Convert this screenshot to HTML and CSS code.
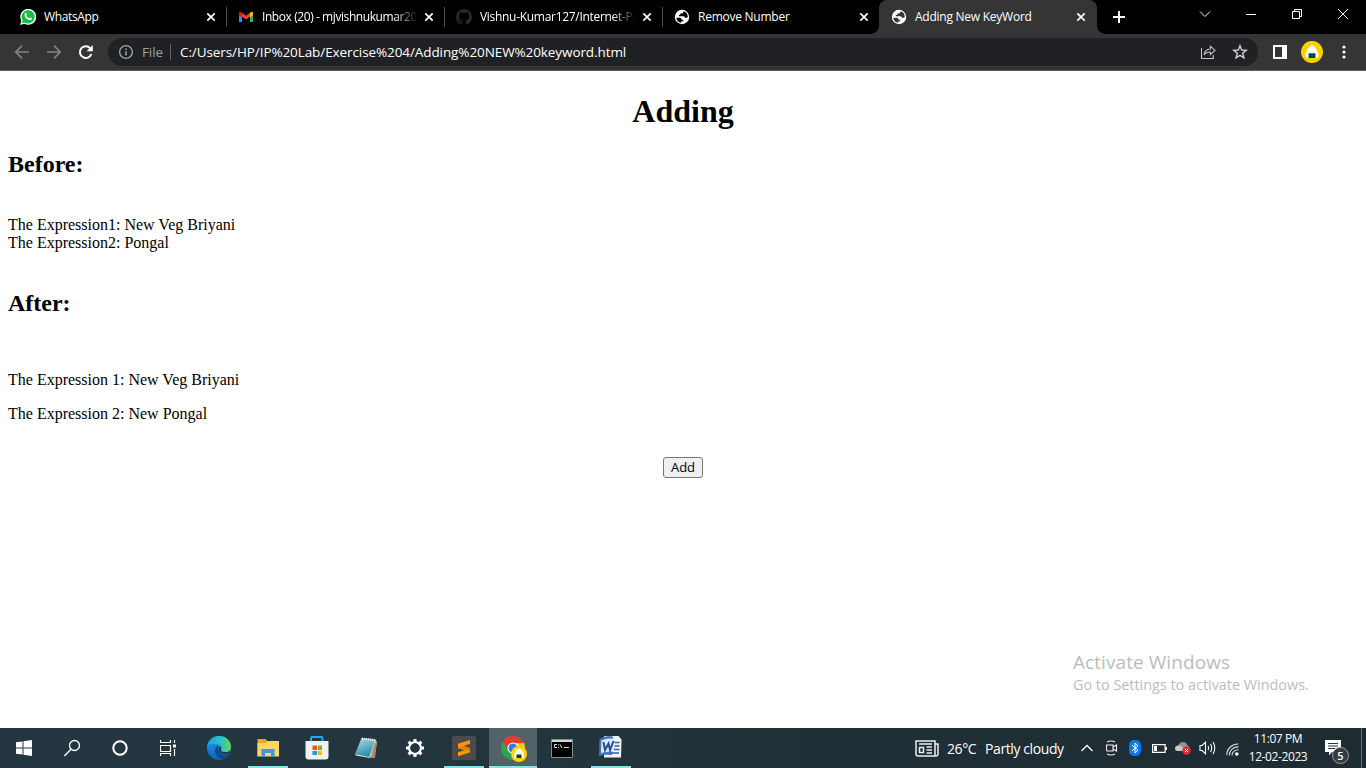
FILE: index.html
```
<!DOCTYPE html>
<html lang="en">
<head>
<meta charset="utf-8">
<title>Adding New KeyWord</title>
<link rel="stylesheet" href="styles.css">
</head>
<body>
<svg class="defs" width="0" height="0">
  <symbol id="close" viewBox="0 0 10 10"><path d="M1.3 1.3l7.4 7.4M8.7 1.3L1.3 8.7" stroke="#fff" stroke-width="1.7"/></symbol>
  <symbol id="globe" viewBox="0 0 16 16"><circle cx="8" cy="8" r="7.2" fill="#fff"/><path d="M2.300 8.700h3.400c1.500 0 1.800.8 1.800 2h1.700v1.600H7.300v1.500A5.900 5.900 0 0 1 2.300 8.700zM9.300 2.300v.6c0 .9-.7 1.500-1.500 1.500H6.300v1.500H4.800v1.400h4.600c.8 0 1.400.6 1.400 1.400h1.500c.8 0 1.200-.5 1.500-1a5.900 5.900 0 0 0-4.500-5.400z" fill="currentColor"/></symbol>
</svg>
<header class="tabstrip">
  <div class="tab">
    <svg class="favicon" viewBox="0 0 16 16"><path d="M.2 15.9l1.1-4.2A8 8 0 1 1 4.4 14.8z" fill="#fff"/><path d="M1.9 14.2l.7-2.8A6.6 6.6 0 1 1 4.8 13.5z" fill="#12c143"/><path d="M5.3 4.1c.5-.4 1-.1 1.2.5l.4 1c.1.4-.4.8-.6 1.1.6 1.2 1.5 2 2.8 2.6.4-.3.7-1 1.1-.9l1.5.8c.4.4-.1 1.5-.9 1.8-2.6.9-6.700-2.800-6.300-5.400.1-.6.4-1.200.8-1.500z" fill="#fff"/></svg>
    <span class="title t1">WhatsApp</span><svg class="close"><use href="#close"/></svg>
  </div>
  <div class="tab">
    <svg class="favicon" viewBox="0 0 16 16"><path d="M1 4v9h3V6z" fill="#4285f4"/><path d="M12 6v7h3V4z" fill="#34a853"/><path d="M4 3.7v4L8 10.6l4-2.900v-4L8 6.800z" fill="#ea4335"/><path d="M1 4.200v2l3 2.200V4L3 3.100C2 2.500 1 3.100 1 4.200z" fill="#c5221f"/><path d="M12 4v4.400l3-2.200v-2c0-1.100-1-1.700-2-1.100z" fill="#fbbc04"/></svg>
    <span class="title fade t2">Inbox (20) - mjvishnukumar20</span><svg class="close"><use href="#close"/></svg>
  </div>
  <div class="tab">
    <svg class="favicon" viewBox="0 0 16 16"><path fill="#24292f" d="M8 0C3.58 0 0 3.58 0 8c0 3.54 2.29 6.53 5.47 7.59.4.07.55-.17.55-.38v-1.49c-2.01.37-2.53-.49-2.69-.94-.09-.23-.48-.94-.82-1.13-.28-.15-.68-.52-.01-.53.63-.01 1.08.58 1.23.82.72 1.21 1.87.87 2.33.66.07-.52.28-.87.51-1.07-1.78-.2-3.64-.89-3.64-3.95 0-.87.31-1.59.82-2.15-.08-.2-.36-1.02.08-2.12 0 0 .67-.21 2.2.82a7.6 7.6 0 0 1 4 0c1.53-1.04 2.2-.82 2.2-.82.44 1.1.16 1.92.08 2.12.51.56.82 1.27.82 2.15 0 3.07-1.87 3.75-3.65 3.95.29.25.54.73.54 1.48v2.2c0 .21.15.46.55.38A8 8 0 0 0 16 8c0-4.42-3.58-8-8-8z"/></svg>
    <span class="title fade t3">Vishnu-Kumar127/Internet-Pr</span><svg class="close"><use href="#close"/></svg>
  </div>
  <div class="tab last">
    <svg class="favicon"><use href="#globe"/></svg>
    <span class="title t4">Remove Number</span><svg class="close"><use href="#close"/></svg>
  </div>
  <div class="tab active">
    <svg class="favicon"><use href="#globe"/></svg>
    <span class="title t5">Adding New KeyWord</span><svg class="close"><use href="#close"/></svg>
  </div>
  <svg class="newtab" viewBox="0 0 12 12"><path d="M6 0v12M0 6h12" stroke="#fff" stroke-width="2"/></svg>
  <div class="controls">
    <svg viewBox="0 0 12 12"><path d="M1 3.5l5 5 5-5" /></svg>
    <svg viewBox="0 0 12 12"><path d="M1 6.5h10"/></svg>
    <svg viewBox="0 0 12 12"><path d="M1.5 3.5h7v7h-7zM3.5 3.5v-2h7v7h-2"/></svg>
    <svg viewBox="0 0 12 12"><path d="M1 1l10 10M11 1L1 11"/></svg>
  </div>
</header>
<nav class="toolbar">
  <svg class="nav" viewBox="0 0 16 16"><path d="M15 8H2M8 1.7L1.8 8 8 14.3" stroke="#858585" stroke-width="1.7"/></svg>
  <svg class="nav" viewBox="0 0 16 16"><path d="M1 8h13M8 1.7L14.2 8 8 14.3" stroke="#858585" stroke-width="1.7"/></svg>
  <svg class="nav" viewBox="0 0 16 16"><path d="M13.4 10A5.9 5.9 0 1 1 12.2 4.1L13 5" stroke="#fff" stroke-width="2"/><path d="M14.8 1v6.2H8.6z" fill="#fff"/></svg>
  <div class="omnibox">
    <svg class="info" viewBox="0 0 16 16"><circle cx="8" cy="8" r="6.4" stroke="#9aa0a6" stroke-width="1.4"/><path d="M8 7.2v4.2M8 4.4V6" stroke="#9aa0a6" stroke-width="1.6"/></svg>
    <span class="scheme">File</span><i></i><span class="url">C:/Users/HP/IP%20Lab/Exercise%204/Adding%20NEW%20keyword.html</span>
    <svg class="share" viewBox="0 0 16 16"><path d="M1.500 4v10.500h11.800V11M4 11c.6-4.200 3-5.800 6.400-6V2.200L15 6.400l-4.600 4.200V8C7.600 8 5.500 8.500 4 11z" stroke="#c4c4c4" stroke-width="1.1"/></svg>
    <svg class="star" viewBox="0 0 16 16"><path d="M8 1.700l1.700 4.300 4.600.3-3.600 3 1.200 4.500L8 11.300l-3.900 2.500 1.200-4.500-3.600-3 4.600-.3z" stroke="#d0d0d0" stroke-width="1.400"/></svg>
  </div>
  <svg class="panel" viewBox="0 0 14 14"><path d="M1 1h12v12H1z" stroke="#fff" stroke-width="2"/><path d="M9 1h4v12H9z" fill="#fff"/></svg>
  <svg class="avatar" viewBox="0 0 22 22"><circle cx="11" cy="11" r="11" fill="#fdd000"/><path d="M11 4.200c3 0 6.500 7.300 6.500 10 0 2.200-1.400 2.800-3 2.800h-7c-1.600 0-3-.6-3-2.800 0-2.700 3.500-10 6.500-10z" fill="#fff"/><path d="M7.500 12.300h7V17h-7z" fill="#004d40"/></svg>
  <svg class="more" viewBox="0 0 4 14"><g fill="#fff"><circle cx="2" cy="2" r="1.600"/><circle cx="2" cy="7" r="1.600"/><circle cx="2" cy="12" r="1.600"/></g></svg>
</nav>
<main class="page">
  <h1>Adding</h1>
  <h2 class="before">Before:</h2>
  <p class="pair">The Expression1: New Veg Briyani<br>The Expression2: Pongal</p>
  <h2 class="after">After:</h2>
  <p class="result">The Expression 1: New Veg Briyani</p>
  <p class="result">The Expression 2: New Pongal</p>
  <button class="add">Add</button>
  <aside class="watermark"><div class="wm-title">Activate Windows</div><div class="wm-text">Go to Settings to activate Windows.</div></aside>
</main>
<footer class="taskbar">
  <div class="sys">
    <svg width="16" height="16" viewBox="0 0 16 16"><path fill="#fff" d="M0 2.300L6.500 1.400v6.100H0zM7.500 1.200L16 0v7.500H7.500zM0 8.500h6.500v6.100L0 13.700zM7.500 8.500H16V16l-8.500-1.200z"/></svg>
    <svg width="18" height="18" viewBox="0 0 18 18"><g stroke="#fff" stroke-width="1.300"><circle cx="11.500" cy="6.500" r="5"/><path d="M8 10.200L1.300 17"/></g></svg>
    <svg width="16" height="16" viewBox="0 0 16 16"><circle cx="8" cy="8" r="6.700" stroke="#fff" stroke-width="2"/></svg>
    <svg width="16" height="16" viewBox="0 0 16 16"><path d="M.5 0v2.500h10V0M.5 16v-2.500h10V16M.5 5.500h10v6H.5zM14.500 0v3M14.500 9v7" stroke="#fff" stroke-width="1.200"/><path d="M13 4.500h3v3h-3z" fill="#fff"/></svg>
  </div>
  <div class="apps">
    <div class="app"><svg width="24" height="24" viewBox="0 0 24 24"><defs><linearGradient id="eg"><stop stop-color="#209ee8"/><stop offset=".6" stop-color="#2bc3c8"/><stop offset="1" stop-color="#62d94f"/></linearGradient><linearGradient id="eb" x2="0" y2="1"><stop stop-color="#279de6"/><stop offset="1" stop-color="#0b62bd"/></linearGradient></defs><circle cx="12" cy="12" r="12" fill="url(#eb)"/><path d="M0 10.500C1.500 4 6 0 12 0c7 0 12 5 12 10.500 0 4-3.500 6-6.500 6-2.500 0-4-1-3.700-1.900 2-1.600.5-6.400-4.500-6.400C5 8 1.500 8 0 10.500z" fill="url(#eg)"/><path d="M10 9.700c-4 4.300-1.500 11.500 5 13.900 4-1.100 6.200-3.300 7.600-5.800-4.800 2.200-9.500.6-11-2.800-.8-1.900-.4-3.500.7-4.800-.8-.4-1.500-.6-2.300-.5z" fill="#114a8b"/><path d="M13.800 14.600c1.400 1.500 5 2.400 8.600.7l.6 1.500c-4 2.500-11 1-11-3.300 0-1.400.3-2.300 1.300-3 .8 1 1.100 2.400.5 4.100z" fill="#22343d"/></svg></div>
    <div class="app open"><svg width="22" height="20" viewBox="0 0 22 20"><path d="M.5 1h8.300l1.400 2H21v15H.5z" fill="#f1a51c"/><path d="M.5 5h8l2-2H22v15.500H.5z" fill="#ffd568"/><path d="M4.500 11h13v8H14v-4H8v4H4.500z" fill="#3998e2"/></svg></div>
    <div class="app"><svg width="24" height="24" viewBox="0 0 24 24"><path d="M6 6V2q0-1 1-1h9.500q1 0 1 1v4" stroke="#28a9e8" stroke-width="2"/><path d="M.5 5h23v15.500a3 3 0 0 1-3 3h-17a3 3 0 0 1-3-3z" fill="#f2f2f2"/><path d="M7.500 9.500H12V14H7.500z" fill="#f25022"/><path d="M13 9.500h4V14h-4z" fill="#7fba00"/><path d="M7.500 15H12v4H7.500z" fill="#00a4ef"/><path d="M13 15h4v4h-4z" fill="#ffb900"/></svg></div>
    <div class="app"><svg width="24" height="24" viewBox="0 0 24 24"><defs><linearGradient id="note" x2=".4" y2="1"><stop stop-color="#b8dde5"/><stop offset="1" stop-color="#2591a7"/></linearGradient></defs><path d="M7 2l14 1 2 3-3 16-5-1z" fill="#bdc1bb"/><path d="M20.500 8L23 6l-2 16h-4z" fill="#a88d63"/><path d="M7.500 2l13.500 2-6 17L1 18z" fill="url(#note)"/><path d="M1 18l14 3 2 1.300L2 19.500z" fill="#dceaec"/><path d="M8 2.500L21 4.300" stroke="#eef" stroke-dasharray="1 1" stroke-width="2"/></svg></div>
    <div class="app"><svg width="20" height="20" viewBox="0 0 20 20"><circle cx="10" cy="10" r="5.800" stroke="#fff" stroke-width="2.400"/><path d="M10 1v4M10 15v4M1 10h4M15 10h4M3.600 3.600l3 3M13.400 13.400l3 3M16.400 3.600l-3 3M6.600 13.400l-3 3" stroke="#fff" stroke-width="3"/><circle cx="10" cy="10" r="4.700" fill="#24353d"/></svg></div>
    <div class="app open"><svg width="24" height="24" viewBox="0 0 24 24"><rect width="24" height="24" rx="1.500" fill="#4b4b4b"/><path d="M6 7.700l12-3.800v3.900l-6.500 2.100 6.500 2v4.500L6 20.200v-4l6.500-2L6 12.300z" fill="#ff9800"/><path d="M6 12.300l5.500-2.400 6.500 2v3z" fill="#e87a00"/></svg></div>
    <div class="app open current"><svg width="28" height="28" viewBox="0 0 28 28"><circle cx="13" cy="13" r="12" fill="#2ea44f"/><path d="M2.600 7A12 12 0 0 1 23.400 7L24.500 9H13l-4 6z" fill="#e33b2e"/><path d="M13 8h11a12 12 0 0 1-11 17l5.500-9z" fill="#fcc31e"/><circle cx="13" cy="13" r="5.600" fill="#fff"/><circle cx="13" cy="13" r="4.500" fill="#3478e5"/><circle cx="19" cy="19" r="8" fill="#ffd500"/><path d="M19 13.500c2.500 0 5 4 5 7 0 1.800-1 2.500-2 2.500h-6c-1 0-2-.7-2-2.500 0-3 2.500-7 5-7z" fill="#fff"/><path d="M16.500 19.500h5V23h-5z" fill="#17343c"/></svg></div>
    <div class="app"><svg width="22" height="19" viewBox="0 0 22 19"><path d="M.5.5h21v18H.5z" fill="#000" stroke="#858c90"/><path d="M1 1h20v2H1z" fill="#d4d9dc"/><path d="M6 5.500H3.500v3H6M7.500 5.500v1M7.500 8v1M9 5.500l2 3.500M13 8.500h5" stroke="#ddd"/></svg></div>
    <div class="app open"><svg width="24" height="24" viewBox="0 0 24 24"><path d="M6 1h14.500L23.500 4.500l-.5 18H6z" fill="#f0f5fc"/><path d="M1.500 4Q8 0 15 1.500L14 20q-7-1-13 1z" fill="#4773c2"/><path d="M3.500 5.500Q10 2.500 17 4l-1 12.500Q9 16 3 18z" fill="#e2ecf9"/><path d="M5.500 7l1.500 8 3.500-6.500L12 15l3.500-9" stroke="#204e9f" stroke-width="2"/><path d="M16.500 7.500h5M16.500 11h5M16 14.500h5.500M13 18h8" stroke="#315fae" stroke-width="1.600"/></svg></div>
  </div>
  <div class="tray">
    <svg class="news" width="24" height="17" viewBox="0 0 24 17"><path d="M1 1h19v15H3q-2 0-2-2zM20 4h3v10q0 2-2.500 2M4 4h13M11.500 7H17M11.500 10H17M11.500 13H17M4.500 7.500h4v5h-4z" stroke="#eee" stroke-width="1.500"/></svg>
    <span class="weather deg">26°C</span><span class="weather sky">Partly cloudy</span>
    <svg class="chev" width="12" height="8" viewBox="0 0 12 8"><path d="M.5 7L6 1.500 11.500 7" stroke="#fff" stroke-width="1.300"/></svg>
    <svg class="meet" width="13" height="16" viewBox="0 0 13 16"><path d="M1.500 5h6.500v6H2.500q-1 0-1-1zM8 7l3.500-2v6L8 9M2 2Q6 0 10 2M2 14q4 2 8 0" stroke="#eee" stroke-width="1.100"/></svg>
    <svg class="bt" width="12" height="16" viewBox="0 0 12 16"><rect width="12" height="16" rx="5" fill="#087be8"/><path d="M3 5.200l6 5L6 13V3l3 2.800-6 5" stroke="#fff"/></svg>
    <svg class="bat" width="15" height="9" viewBox="0 0 15 9"><path d="M.6.600h12.500v7.800H.6zM14.400 3v3" stroke="#fff" stroke-width="1.200"/><path d="M2 2h3v5H2z" fill="#fff"/></svg>
    <svg class="cloud" width="16" height="14" viewBox="0 0 16 14"><path d="M3 5.500Q4 1 8 1q3 0 4.500 3.200Q14 5 14.500 7L10 9z" fill="#8d9397"/><path d="M0 7.500Q0 4.500 3.500 4.500q3 0 7 4.500v1H3Q0 10 0 7.500z" fill="#c9cccd"/><circle cx="11.500" cy="9.500" r="4.200" fill="#e02d35"/><path d="M10 8l3 3M13 8l-3 3" stroke="#fff"/></svg>
    <svg class="vol" width="17" height="14" viewBox="0 0 17 14"><path d="M1 4.500h2.200L6.500 1.200v11.600L3.200 9.500H1zM9 5q1.200 2 0 4M11.500 3q2.400 4 0 8M14 1q3.600 6 0 12" stroke="#fff" stroke-width="1.100"/></svg>
    <svg class="wifi" width="13" height="13" viewBox="0 0 13 13"><path d="M.7 12A11.300 11.300 0 0 1 12.500 1M3.300 12.500a8.600 8.600 0 0 1 9.200-8.600M6 12.500a6 6 0 0 1 6.500-5.800" stroke="#ddd" stroke-width="1.100"/><circle cx="10.800" cy="11" r="1.800" fill="#fff"/></svg>
    <div class="clock"><span class="time">11:07 PM</span><span class="date">12-02-2023</span></div>
    <div class="notify"><svg width="16" height="16" viewBox="0 0 16 16"><path d="M0 0h16v12H7l-3 3.500V12H0z" fill="#fff"/><path d="M3 3.500h10M3 6h10M3 8.500h7" stroke="#26343b"/></svg><span class="badge">5</span></div>
    <i class="peek"></i>
  </div>
</footer>
</body>
</html>
```
FILE: styles.css
```
* { box-sizing: border-box; }
body { margin: 0; width: 1366px; height: 768px; overflow: hidden; display: flex; flex-direction: column; background: #fff; font-family: "Open Sans", "Noto Sans", sans-serif; }
svg { fill: none; flex: none; display: block; }
.defs { position: absolute; }
span { white-space: nowrap; }

.tabstrip { height: 34px; flex: none; background: #000; padding-left: 8px; display: flex; align-items: stretch; color: #fff; font-size: 12px; }
.tab { width: 218px; flex: none; padding: 0 10px 0 12px; display: flex; align-items: center; position: relative; color: #000; }
.tab:not(.last):not(.active)::after { content: ""; position: absolute; right: -1px; top: 7px; width: 1px; height: 20px; background: #4a4a4a; }
.last { width: 217px; }
.last .title { width: 153px; }
.active { background: #353535; border-radius: 8px 8px 0 0; color: #353535; padding: 0 11px 0 12px; }
.active::before, .active::after { content: ""; position: absolute; bottom: 0; width: 8px; height: 8px; }
.active::before { left: -8px; background: radial-gradient(circle at 0 0, transparent 7.5px, #353535 8px); }
.active::after { right: -8px; background: radial-gradient(circle at 100% 0, transparent 7.5px, #353535 8px); }
.favicon { width: 16px; height: 16px; margin-right: 8px; }
.title { width: 154px; overflow: hidden; color: #fff; line-height: 18px; }
.active .title { width: 153px; }
.fade { -webkit-mask-image: linear-gradient(90deg, #000 132px, transparent 156px); mask-image: linear-gradient(90deg, #000 132px, transparent 156px); }
.t1 { letter-spacing: -0.35px; }
.t4, .t5 { letter-spacing: -0.25px; }
.t2 { letter-spacing: -0.42px; }
.t3 { letter-spacing: -0.3px; }
.close { width: 10px; height: 10px; margin-left: 8px; }
.newtab { width: 12px; height: 12px; margin: 11px 0 0 16px; }
.controls { margin-left: auto; padding: 8px 17px 0 0; display: flex; gap: 34px; }
.controls svg { width: 12px; height: 12px; stroke: #fff; stroke-width: 1; }

.toolbar { height: 37px; flex: none; background: #353535; border-bottom: 1px solid #5b5b5b; padding-left: 14px; display: flex; align-items: center; }
.nav { width: 16px; height: 16px; margin-right: 16px; }
.omnibox { width: 1150px; height: 28px; border-radius: 14px; background: #202124; display: flex; align-items: center; padding-left: 10px; margin-left: -2px; font-size: 13.5px; color: #fff; }
.info { width: 16px; height: 16px; }
.scheme { width: 28px; margin-left: 8px; color: #9aa0a6; font-size: 13.5px; letter-spacing: -0.1px; }
.omnibox i { width: 1px; height: 16px; background: #606367; margin-right: 9px; }
.url { letter-spacing: -0.09px; }
.share { width: 16px; height: 16px; margin-left: auto; }
.star { width: 16px; height: 16px; margin: 0 10px 0 16px; }
.panel { width: 14px; height: 14px; margin-left: 15px; }
.avatar { width: 22px; height: 22px; margin-left: 14px; }
.more { width: 4px; height: 14px; margin-left: 19px; }

.page { flex: 1; position: relative; padding: 0 8px; background: #fff; display: flex; flex-direction: column; font-family: "Liberation Serif", "Times New Roman", serif; font-size: 16px; line-height: 18px; color: #000; }
.page h1 { margin: 22px 0 0; font-size: 32px; line-height: 37px; text-align: center; }
.page h2 { margin: 0; font-size: 24px; line-height: 27px; }
.page .before { margin-top: 21px; }
.page p { margin: 0; }
.page .pair { margin-top: 38px; }
.page .after { margin-top: 38px; }
.page .result { margin-top: 16px; }
.page .after + .result { margin-top: 54px; }
.add { width: 40px; height: 21px; align-self: center; margin-top: 34px; padding: 0 0 1px; border: 1px solid #767676; border-radius: 3px; background: #efefef; color: #000; font: 13px/16px "Open Sans", sans-serif; }
.watermark { position: absolute; left: 1073px; top: 579px; font-family: "Open Sans", sans-serif; color: #bcbcbc; white-space: nowrap; }
.wm-title { font-size: 19px; line-height: 25px; letter-spacing: 0.07px; }
.wm-text { font-size: 14.4px; line-height: 20px; }

.taskbar { height: 40px; flex: none; background: linear-gradient(90deg, #243740, #22343c 45%, #202e35 68%, #1e2b33); display: flex; color: #fff; }
.sys { display: flex; width: 195px; }
.sys svg { margin: 12px 16px; }
.sys svg:nth-child(2) { margin: 11px 15px; }
.apps { display: flex; gap: 1px; }
.app { width: 48px; display: flex; align-items: center; justify-content: center; position: relative; }
.app:nth-child(n+3):not(.open) svg { margin-right: 1px; }
.app:last-child svg { margin-right: 2px; margin-top: -2px; }
.open::after { content: ""; position: absolute; left: 4px; right: 4px; bottom: 0; height: 2px; background: #83e5e9; }
.current { background: #536168; }
.current svg { margin-left: 2px; margin-top: 2px; }
.current::after { left: 0; right: 0; }
.tray { margin-left: auto; width: 451px; display: flex; align-items: center; }
.weather { font-size: 14px; line-height: 20px; letter-spacing: -0.4px; margin-top: 2px; }
.deg { width: 38px; margin-left: 8px; }
.sky { width: 95px; }
.chev { margin-left: 1px; }
.meet { margin-left: 12px; }
.bt { margin-left: 11px; }
.bat { margin-left: 11px; }
.cloud { margin-left: 8px; }
.vol { margin-left: 8px; }
.wifi { margin-left: 10px; margin-top: 3px; }
.clock { width: 78px; display: flex; flex-direction: column; align-items: center; font-size: 12px; line-height: 18px; letter-spacing: -0.4px; }
.notify { position: relative; margin-left: 8px; }
.badge { position: absolute; left: 7px; top: 7px; width: 17px; height: 17px; border: 1px solid #9ba1a4; border-radius: 50%; background: #353a3d; font-size: 11px; font-weight: 600; line-height: 15px; text-align: center; }
.peek { width: 1px; height: 40px; margin-left: 20px; background: #66717a; }
```
